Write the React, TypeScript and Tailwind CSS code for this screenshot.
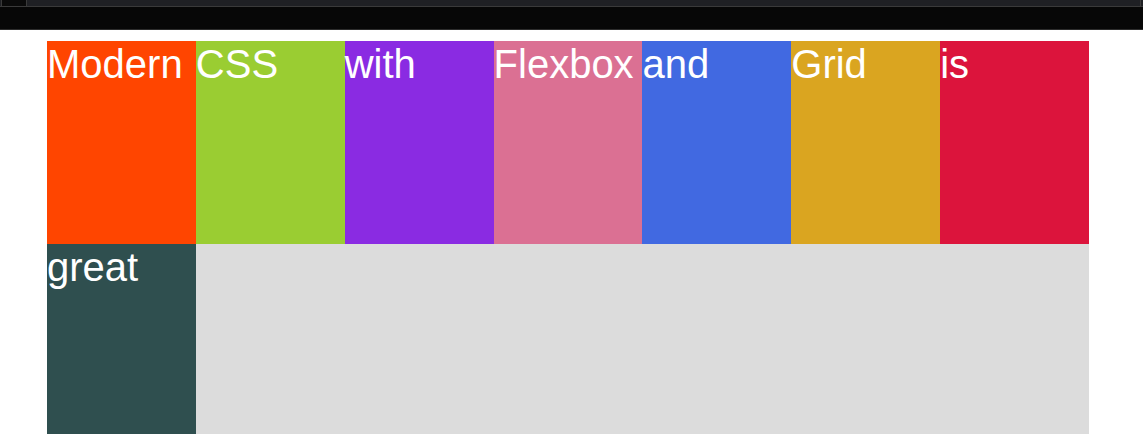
const cells = [
  { label: "Modern", bg: "bg-[#ff4500]" },
  { label: "CSS", bg: "bg-[#9acd32]" },
  { label: "with", bg: "bg-[#8a2be2]" },
  { label: "Flexbox", bg: "bg-[#db7093]" },
  { label: "and", bg: "bg-[#4169e1]" },
  { label: "Grid", bg: "bg-[#daa520]" },
  { label: "is", bg: "bg-[#dc143c]" },
  { label: "great", bg: "bg-[#2f4f4f]" },
];

export default function App() {
  return (
    <div className="min-h-[434px] bg-white font-['Liberation_Sans',Arial,sans-serif]">
      {/* browser-ish chrome */}
      <div className="flex h-[7px] border-b border-[#3a3a3a] bg-[#1f2024]">
        <div className="ml-px w-[26px] border-x border-[#3a3a3a] bg-[#0a0a0a]" />
        <div className="flex-1" />
        <div className="w-px bg-[#3a3a3a]" />
        <div className="w-[2px]" />
      </div>
      <div className="h-[23px] border-b border-[#2c2c2c] bg-[#070707]" />

      <div className="ml-[47px] mt-[11px] grid w-[1042px] grid-cols-7 auto-rows-[203px] bg-[#dcdcdc]">
        {cells.map((c) => (
          <div
            key={c.label}
            className={`${c.bg} text-[40px] leading-[46px] text-white whitespace-nowrap`}
          >
            {c.label}
          </div>
        ))}
      </div>
    </div>
  );
}
